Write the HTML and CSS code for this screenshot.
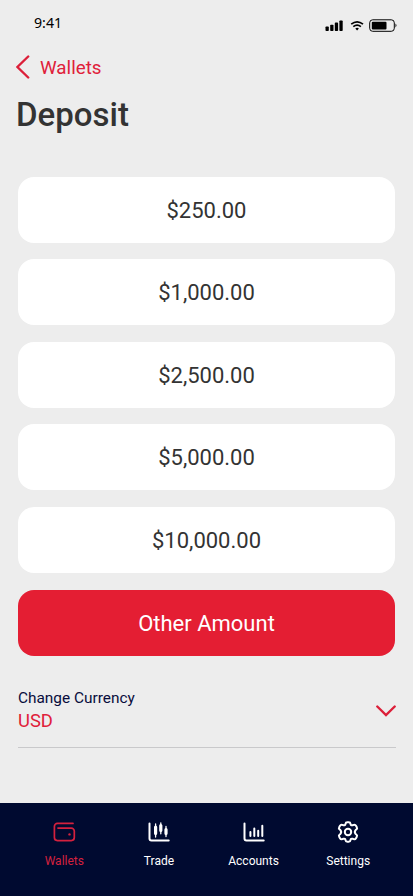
FILE: index.html
```html
<!DOCTYPE html>
<html lang="en">
<head>
<meta charset="utf-8">
<title>Deposit</title>
<link rel="stylesheet" href="styles.css">
</head>
<body>
<div class="screen">
  <div class="status">
    <span class="time">9:41</span>
    <svg class="status-icons" width="74" height="16" viewBox="0 0 74 16">
      <g fill="#000">
        <rect x="0.500" y="8.500" width="3.300" height="4.500" rx=".8"/>
        <rect x="5.200" y="6.800" width="3.300" height="6.200" rx=".8"/>
        <rect x="9.800" y="4.600" width="3.300" height="8.400" rx=".8"/>
        <rect x="14.400" y="2.500" width="3.300" height="10.500" rx=".8"/>
        <path d="M30.300 10.500Q32.100 9 33.900 10.500L32.100 12.600z"/>
        <rect x="46.800" y="3.700" width="14.700" height="7.700" rx="1"/>
        <path d="M70.500 5.600q2 1.900 0 3.800z"/>
      </g>
      <g fill="none" stroke="#000">
        <path stroke-width="1.700" d="M26.200 6.200q5.900-4.600 11.800 0M28.300 8.600q3.800-2.900 7.600 0"/>
        <rect x="44.700" y="1.800" width="24.600" height="11.500" rx="3" stroke-width="1"/>
      </g>
    </svg>
  </div>

  <a class="back">
    <svg width="14" height="24" viewBox="0 0 14 24"><path d="M12.200 1.500L1.400 12l10.800 10.500"/></svg>
    <span>Wallets</span>
  </a>
  <h1>Deposit</h1>

  <div class="amounts">
    <div class="amount">$250.00</div>
    <div class="amount">$1,000.00</div>
    <div class="amount">$2,500.00</div>
    <div class="amount">$5,000.00</div>
    <div class="amount">$10,000.00</div>
    <div class="amount other">Other Amount</div>
  </div>

  <div class="currency">
    <div>
      <div class="label">Change Currency</div>
      <div class="value">USD</div>
    </div>
    <svg width="20" height="12" viewBox="0 0 20 12"><path d="M1.300 1.500l8.700 8.500 8.700-8.500"/></svg>
  </div>

  <nav class="tabs">
    <div class="tab active">
      <svg width="24" height="24" viewBox="0 0 24 24"><path d="M21 3.400H5.400a3 3 0 0 0-3 3v11.200a3 3 0 0 0 3 3h13.900a3 3 0 0 0 3-3v-6.500a3 3 0 0 0-3-3H6"/><circle class="solid" cx="17.500" cy="14.400" r="1.200"/></svg>
      <span>Wallets</span>
    </div>
    <div class="tab">
      <svg width="24" height="24" viewBox="0 0 24 24"><path class="thick" d="M2.500 3.400v15.200a2 2 0 0 0 2 2h17.200"/><path d="M8.600 4v13M13.800 2.800v11M19 6.500v10" stroke-width="1.300"/><path d="M8.600 7v6.500M13.800 5.500v5M19 9.500v4" stroke-width="3.200"/></svg>
      <span>Trade</span>
    </div>
    <div class="tab">
      <svg width="24" height="24" viewBox="0 0 24 24"><path class="thick" d="M2.500 3.400v15.200a2 2 0 0 0 2 2h17.200M8.400 12v4M12.300 8.500V16M16.200 10.800V16M20.300 5.800V16"/></svg>
      <span>Accounts</span>
    </div>
    <div class="tab">
      <svg width="24" height="24" viewBox="0 0 24 24"><path class="thick" d="M9.500 3.800Q9.700 2.200 11.300 2.200h1.400q1.600 0 1.800 1.600.2 1.900 2.100 1.500l1.100-.4q1.500-.5 2.300.9l.8 1.400q.8 1.400-.5 2.300l-.7.600q-1.600 1.900 0 3.800l.7.600q1.300.9.500 2.300l-.8 1.400q-.8 1.400-2.300.9l-1.100-.4q-1.900-.4-2.100 1.500-.2 1.600-1.800 1.600h-1.400q-1.600 0-1.800-1.600-.2-1.900-2.100-1.500l-1.100.4q-1.500.5-2.300-.9l-.8-1.400q-.8-1.400.5-2.300l.7-.6q1.600-1.900 0-3.800l-.7-.6q-1.300-.9-.5-2.300L4 5.800q.8-1.400 2.300-.9l1.100.4q1.900.4 2.100-1.500z"/><circle class="thick" cx="12" cy="12" r="3.200"/></svg>
      <span>Settings</span>
    </div>
  </nav>
</div>
</body>
</html>
```
FILE: styles.css
```css
* { box-sizing: border-box; }
body {
  margin: 0;
  background: #ededed;
  font-family: Roboto, sans-serif;
  color: #333;
}
.screen {
  display: flex;
  flex-direction: column;
  width: 413px;
  height: 896px;
  overflow: hidden;
}
.status {
  display: flex;
  justify-content: space-between;
  align-items: center;
  height: 46px;
  padding: 3px 14px 0 34px;
}
.time {
  font: 14.2px/20px "Noto Sans", sans-serif;
  color: #000;
  margin-top: -3px;
}
.status-icons { margin-top: 3px; }
.back {
  display: flex;
  align-items: center;
  gap: 10px;
  height: 42px;
  padding-left: 16px;
  font-size: 18.8px;
  color: #e02039;
}
.back span { padding-top: 2px; }
.back svg, .currency svg {
  fill: none;
  stroke: #dc1f39;
  stroke-width: 2.4;
  stroke-linecap: round;
}
h1 {
  margin: 7px 0 0 16px;
  font-size: 33px;
  line-height: 40px;
  font-weight: 500;
}
.amounts {
  display: flex;
  flex-direction: column;
  gap: 16.600px;
  padding: 0 18px;
  margin-top: 41.700px;
}
.amount {
  height: 66px;
  border-radius: 16px;
  background: #fff;
  font-size: 22px;
  line-height: 67px;
  text-align: center;
}
.amount:nth-child(4) { line-height: 68px; }
.other { background: #e41e33; color: #fff; line-height: 68px; }
.currency {
  display: flex;
  justify-content: space-between;
  align-items: center;
  margin: 27px 17px 0 18px;
  height: 65px;
  padding-bottom: 8px;
  border-bottom: 1px solid #c9c9cb;
}
.label { margin-top: -2px; font-size: 15.4px; line-height: 22px; color: #080c3c; }
.value { font-size: 18.4px; line-height: 24px; color: #e02039; }
.tabs {
  display: flex;
  height: 93px;
  margin-top: auto;
  padding: 17px 17.500px 0 17px;
  background: #000a30;
}
.tab {
  flex: 1;
  display: flex;
  flex-direction: column;
  align-items: center;
  gap: 9px;
  font-size: 12px;
  line-height: 16px;
  color: #fff;
}
.tab svg { fill: none; stroke: currentColor; stroke-width: 1.7; stroke-linecap: round; stroke-linejoin: round; }
.tab .thick { stroke-width: 2; }
.tab .solid { fill: currentColor; stroke: none; }
.active { color: #d4213e; }
```
